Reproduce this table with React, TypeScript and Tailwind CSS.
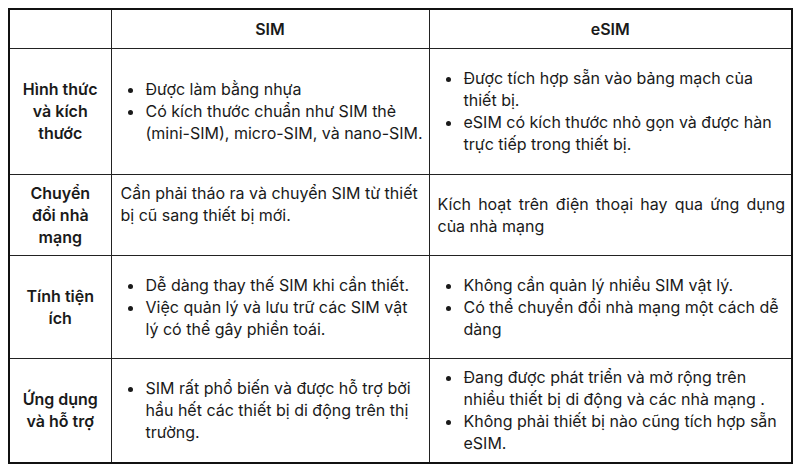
const rows = [
  {
    label: ['Hình thức', 'và kích', 'thước'],
    sim: { list: ['Được làm bằng nhựa', 'Có kích thước chuẩn như SIM thẻ (mini-SIM), micro-SIM, và nano-SIM.'], tight: true },
    esim: { list: ['Được tích hợp sẵn vào bảng mạch của thiết bị.', 'eSIM có kích thước nhỏ gọn và được hàn trực tiếp trong thiết bị.'] },
    h: 'h-[126px]',
  },
  {
    label: ['Chuyển', 'đổi nhà', 'mạng'],
    sim: { text: 'Cần phải tháo ra và chuyển SIM từ thiết bị cũ sang thiết bị mới.', top: true },
    esim: { text: 'Kích hoạt trên điện thoại hay qua ứng dụng của nhà mạng' },
    h: 'h-[81px]',
  },
  {
    label: ['Tính tiện', 'ích'],
    sim: { list: ['Dễ dàng thay thế SIM khi cần thiết.', 'Việc quản lý và lưu trữ các SIM vật lý có thể gây phiền toái.'] },
    esim: { list: ['Không cần quản lý nhiều SIM vật lý.', 'Có thể chuyển đổi nhà mạng một cách dễ dàng'] },
    h: 'h-[103px]',
  },
  {
    label: ['Ứng dụng', 'và hỗ trợ'],
    sim: { list: ['SIM rất phổ biến và được hỗ trợ bởi hầu hết các thiết bị di động trên thị trường.'] },
    esim: { list: ['Đang được phát triển và mở rộng trên nhiều thiết bị di động và các nhà mạng .', 'Không phải thiết bị nào cũng tích hợp sẵn eSIM.'] },
    h: 'h-[105px]',
  },
];

type Cell = { list?: string[]; text?: string; top?: boolean; tight?: boolean };

const Content = ({ cell, side }: { cell: Cell; side: 'sim' | 'esim' }) => {
  if (cell.list) {
    return (
      <ul className={side === 'sim' ? 'list-disc pl-[30px]' : 'list-disc pl-[25px]'}>
        {cell.list.map((item) => (
          <li key={item} className="pl-[1px]">{item}</li>
        ))}
      </ul>
    );
  }
  return <p className={side === 'esim' ? 'text-justify' : ''}>{cell.text}</p>;
};

const simCellClass = (cell: Cell) => {
  if (cell.top) return 'border border-[#222] align-top pt-[7px] pl-[9px] pr-[8px]';
  if (cell.tight) return 'border border-[#222] align-middle pl-[3px] pr-[1px]';
  return 'border border-[#222] align-middle pl-[3px] pr-[8px]';
};

const App = () => {
  return (
    <div className="w-[800px] h-[475px] bg-white pt-[8px] pl-[8px]">
      <table
        className="table-fixed border-collapse border-2 border-[#111] text-[16px] leading-[22px] text-[#1a1a1a]"
        style={{ fontFamily: 'Inter, "Noto Sans", sans-serif' }}
      >
        <colgroup>
          <col className="w-[102px]" />
          <col className="w-[318px]" />
          <col className="w-[363px]" />
        </colgroup>
        <thead>
          <tr className="h-[39px]">
            <th className="border border-[#222]"></th>
            <th className="border border-[#222] font-semibold text-center">SIM</th>
            <th className="border border-[#222] font-semibold text-center">eSIM</th>
          </tr>
        </thead>
        <tbody>
          {rows.map((r) => (
            <tr key={r.label.join(' ')} className={r.h}>
              <td className="border border-[#222] text-center font-semibold align-middle px-1">
                {r.label.map((l) => (
                  <div key={l}>{l}</div>
                ))}
              </td>
              <td className={simCellClass(r.sim)}>
                <Content cell={r.sim} side="sim" />
              </td>
              <td className="border border-[#222] align-middle pl-[8px] pr-[6px]">
                <Content cell={r.esim} side="esim" />
              </td>
            </tr>
          ))}
        </tbody>
      </table>
    </div>
  );
};

export default App;
